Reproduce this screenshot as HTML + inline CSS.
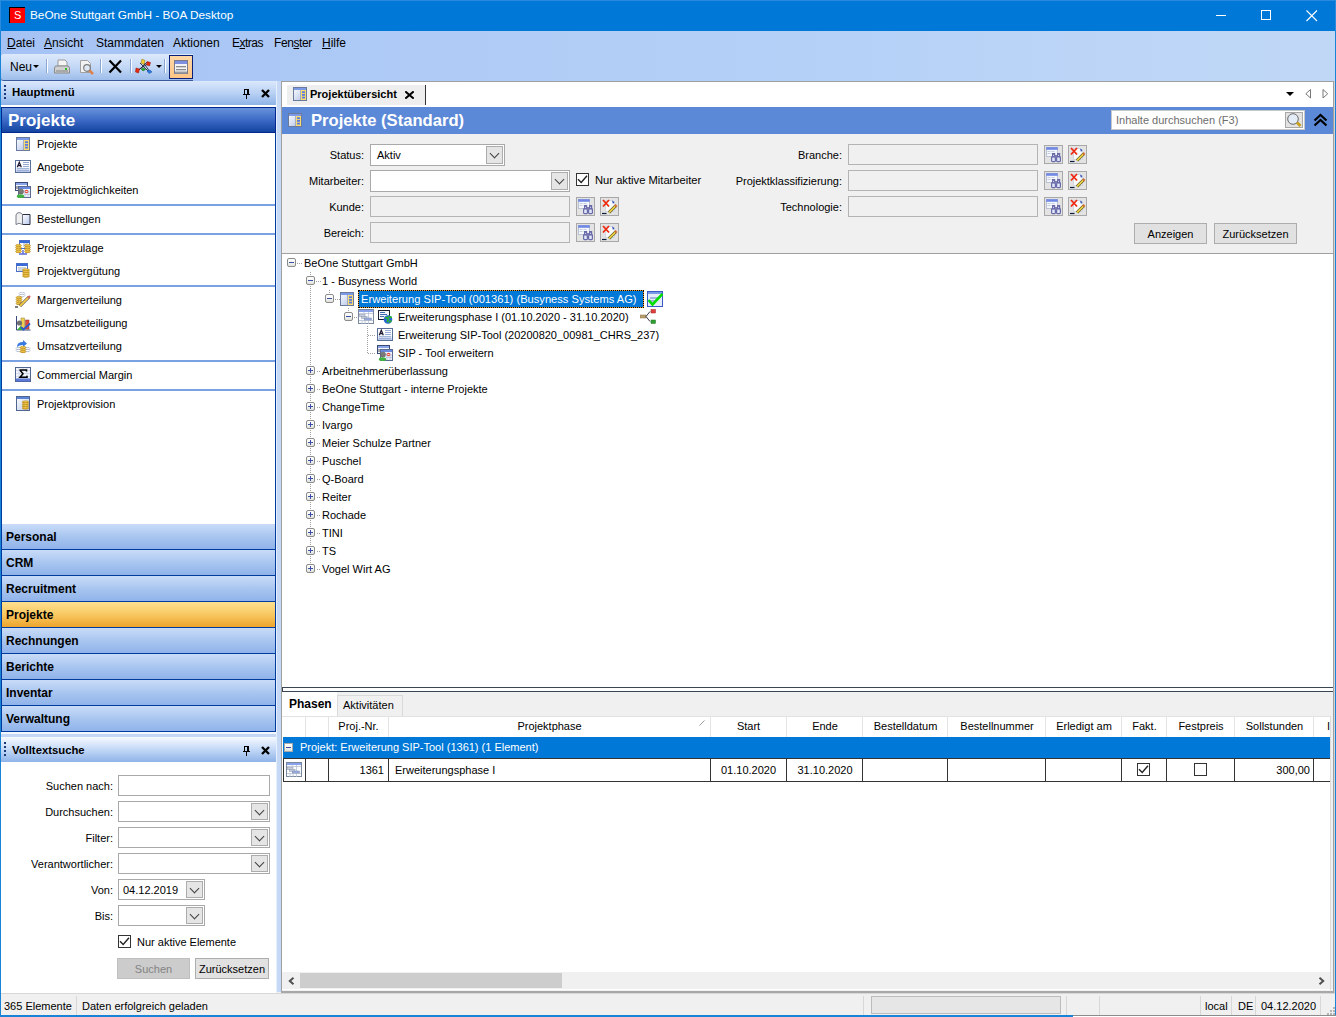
<!DOCTYPE html>
<html><head><meta charset="utf-8">
<style>
*{box-sizing:border-box;margin:0;padding:0}
html,body{width:1336px;height:1017px;overflow:hidden;background:#f0f0f0;font-family:"Liberation Sans",sans-serif;font-size:11px;color:#000}
.a{position:absolute}
.t{position:absolute;white-space:nowrap;line-height:1}
#title{left:0;top:0;width:1336px;height:31px;background:#0078d7;border-top:1px solid #2a8ade;border-left:1px solid #2a8ade;border-right:1px solid #2a8ade}
#menubar{left:1px;top:31px;width:1334px;height:50px;background:linear-gradient(90deg,#a4c2f4,#b0ccf6 35%,#b4d0f7 60%,#bdd6f7 85%,#c0d7f6)}
#toolbar{left:1px;top:54px;width:192px;height:27px;background:linear-gradient(#dde9fb,#c3d8f6 50%,#9ebdeb);border-bottom:1px solid #3b5c9a;border-radius:3px 0 0 3px}
.hdr{background:linear-gradient(#dbe8fc,#b9d1f4 50%,#8fb3e8)}
.navbtn{position:absolute;left:1px;width:275px;height:26px;background:linear-gradient(#c9dcf8,#a9c6f0 50%,#8fb3ea);border-bottom:1px solid #003c9d;font-weight:bold;font-size:12px}
.navbtn span{position:absolute;left:5px;top:7px;line-height:1}
.lbl{position:absolute;white-space:nowrap;line-height:1;text-align:right;font-size:12px}
.box{position:absolute;background:#fff;border:1px solid #a9a9a9}
.dis{position:absolute;background:#f0f0f0;border:1px solid #b4b4b4}
.cbtn{position:absolute;top:1px;right:1px;width:17px;bottom:1px;background:#e5e5e5;border:1px solid #acacac}
.cbtn::after{content:"";position:absolute;left:4px;top:3px;width:6px;height:6px;border-right:1px solid #404040;border-bottom:1px solid #404040;transform:rotate(45deg)}
.chk{position:absolute;width:13px;height:13px;border:1px solid #333;background:#fff}
.tb{position:absolute;width:9px;height:9px;border:1px solid #8c8c8c;border-radius:2px;background:linear-gradient(#fff,#f4f4f0 50%,#e2e2dc)}
.tb::after{content:"";position:absolute;left:1px;top:3px;width:5px;height:1px;background:#3b4fa8}
.tb.p::before{content:"";position:absolute;left:3px;top:1px;width:1px;height:5px;background:#3b4fa8}
.dv{position:absolute;width:1px;background:repeating-linear-gradient(#a0a0a0 0 1px,transparent 1px 2px)}
.dh{position:absolute;height:1px;background:repeating-linear-gradient(90deg,#a0a0a0 0 1px,transparent 1px 2px)}
.btn{position:absolute;background:#e1e1e1;border:1px solid #adadad;font-size:12px;text-align:center;line-height:20px}
</style></head><body>
<svg width="0" height="0" style="position:absolute"><defs>
<linearGradient id="gw" x1="0" y1="0" x2="1" y2="1"><stop offset="0" stop-color="#fff"/><stop offset="1" stop-color="#b8c8e8"/></linearGradient>
<linearGradient id="gc" x1="0" y1="0" x2="0" y2="1"><stop offset="0" stop-color="#ffe27a"/><stop offset="1" stop-color="#d49a10"/></linearGradient>
<symbol id="i-proj" viewBox="0 0 14 14"><linearGradient id="gp" x1="0" y1="0" x2="1" y2="1"><stop offset="0" stop-color="#fff"/><stop offset="1" stop-color="#aabce6"/></linearGradient><rect x=".5" y=".5" width="13" height="13" fill="url(#gp)" stroke="#6a7a9c"/><rect x="1" y="1" width="12" height="2" fill="#7c9ae6"/><rect x="8" y="3" width="5" height="10" fill="#f8dc70"/><path d="M7.5 3v10" stroke="#8a90a0" stroke-width=".6"/><rect x="9" y="4.3" width="3" height="1.8" fill="#5a7ae0"/><rect x="9" y="7" width="3" height="1.8" fill="#5a7ae0"/><rect x="9" y="9.7" width="3" height="1.8" fill="#5a7ae0"/></symbol>
<symbol id="i-doc" viewBox="0 0 16 13"><linearGradient id="gd" x1="0" y1="0" x2="0" y2="1"><stop offset="0" stop-color="#fff"/><stop offset=".6" stop-color="#f4f7fc"/><stop offset="1" stop-color="#b4c4e8"/></linearGradient><rect x=".5" y=".5" width="15" height="12" fill="url(#gd)" stroke="#5a6f9a"/><path d="M2.3 7.2L4.3 2.2l2 5M3 5.6h2.6" stroke="#201830" stroke-width="1.2" fill="none"/><path d="M8 2.5h6M8 4.5h6M8 6.5h6M2 8.7h12M2 10.7h12" stroke="#8aa0d0" stroke-width=".9"/></symbol>
<symbol id="i-opp" viewBox="0 0 16 16"><rect x=".5" y=".5" width="12" height="8" fill="#f4f6fb" stroke="#3a4a78"/><rect x="1" y="1" width="11" height="2" fill="#8aa4e8"/><path d="M2 4v3" stroke="#555" stroke-width="1"/><rect x="3.5" y="4.5" width="12" height="11" fill="#eef2fa" stroke="#5a6a90"/><rect x="4" y="5" width="11" height="2" fill="#6a8ae0"/><path d="M10 8v7M13 8v7M9 10h6M9 12.5h6" stroke="#b0bcd8" stroke-width=".7"/><circle cx="11.5" cy="9.5" r="1.8" fill="#e84a3a"/><rect x="10.5" y="9.2" width="2" height=".8" fill="#fff"/><circle cx="6" cy="9.5" r="2.6" fill="#7a7a7a" stroke="#555" stroke-width=".5"/><ellipse cx="5.5" cy="14.2" rx="3.6" ry="1.9" fill="#40b040"/></symbol>
<symbol id="i-book" viewBox="0 0 16 13"><linearGradient id="gb" x1="0" y1="0" x2="1" y2="1"><stop offset="0" stop-color="#fff"/><stop offset="1" stop-color="#b8c8ec"/></linearGradient><path d="M7.5 2.5h7.5v10H7.5z" fill="url(#gb)" stroke="#2a2f40"/><path d="M7.5 12.5Q4 10 1 12.5V3Q2 .5 4 .6 6 .6 7.5 2.5z" fill="#f0f0f0" stroke="#6a7080" stroke-width=".9"/></symbol>
<symbol id="i-coins" viewBox="0 0 16 16"><rect x="4.5" y=".5" width="10" height="8" fill="#fff" stroke="#4a6fc8"/><rect x="5" y="1" width="9" height="2" fill="#3a6ad8"/><path d="M8 4h5M8 6h5" stroke="#9ab"/><path d="M4 14h8M8 10v4" stroke="#5a6ad8" stroke-width="1.4"/><g fill="url(#gc)" stroke="#a87808" stroke-width=".5"><ellipse cx="3.5" cy="5.5" rx="3" ry="1.2"/><ellipse cx="3.5" cy="7.5" rx="3" ry="1.2"/><ellipse cx="3.5" cy="9.5" rx="3" ry="1.2"/><ellipse cx="3.5" cy="11.5" rx="3" ry="1.2"/><ellipse cx="12.5" cy="5.5" rx="3" ry="1.2"/><ellipse cx="12.5" cy="7.5" rx="3" ry="1.2"/><ellipse cx="12.5" cy="9.5" rx="3" ry="1.2"/><ellipse cx="12.5" cy="11.5" rx="3" ry="1.2"/></g></symbol>
<symbol id="i-verg" viewBox="0 0 14 15"><rect x=".5" y=".5" width="11" height="8" fill="#fff" stroke="#4a6fc8"/><rect x="1" y="1" width="10" height="2" fill="#3a6ad8"/><path d="M2 5h8M2 7h8" stroke="#9ab"/><g fill="url(#gc)" stroke="#a87808" stroke-width=".5"><ellipse cx="10" cy="7" rx="3.5" ry="1.3"/><ellipse cx="10" cy="9" rx="3.5" ry="1.3"/><ellipse cx="10" cy="11" rx="3.5" ry="1.3"/><ellipse cx="10" cy="13" rx="3.5" ry="1.3"/></g></symbol>
<symbol id="i-marg" viewBox="0 0 16 16"><g fill="#fff" stroke="#8899bb" stroke-width=".5"><ellipse cx="7" cy="1.5" rx="3" ry="1.2"/><ellipse cx="7" cy="3.5" rx="3" ry="1.2"/></g><g fill="url(#gc)" stroke="#a87808" stroke-width=".5"><ellipse cx="4" cy="5.5" rx="3" ry="1.2"/><ellipse cx="4" cy="7.5" rx="3" ry="1.2"/><ellipse cx="4" cy="9.5" rx="3" ry="1.2"/><ellipse cx="4" cy="11.5" rx="3" ry="1.2"/></g><path d="M5 14l9-9" stroke="#444" stroke-width="3"/><path d="M5 14l9-9" stroke="#f2c84a" stroke-width="2"/><path d="M13 6l2-2" stroke="#d06060" stroke-width="2.2"/><path d="M0 15h3" stroke="#000"/></symbol>
<symbol id="i-umsb" viewBox="0 0 16 16"><path d="M1.5 1v14h14" fill="none" stroke="#3a4a80" stroke-width="1"/><rect x="6" y="3" width="3.5" height="11" fill="#f0d050" stroke="#8a7a30" stroke-width=".5"/><rect x="10.5" y="5" width="3.5" height="9" fill="#e04a3a" stroke="#8a3a2a" stroke-width=".5"/><circle cx="4.5" cy="8" r="2.6" fill="#707070"/><path d="M2 15l3.5-4 3 3V15z" fill="#3ab03a"/><path d="M6 12l2.5 2.5 6.5-6" stroke="#2a5ad0" stroke-width="1.8" fill="none"/></symbol>
<symbol id="i-umsv" viewBox="0 0 16 16"><path d="M2 9q0-5 6-5V2l4 3.5L8 9V7q-4 0-6 2z" fill="#3a7ae0"/><g fill="#fff" stroke="#8899bb" stroke-width=".6"><ellipse cx="4" cy="10.5" rx="3" ry="1.2"/><ellipse cx="4" cy="12.5" rx="3" ry="1.2"/><ellipse cx="12" cy="10.5" rx="3" ry="1.2"/><ellipse cx="12" cy="12.5" rx="3" ry="1.2"/></g><g fill="url(#gc)" stroke="#a87808" stroke-width=".5"><ellipse cx="8" cy="9.5" rx="3" ry="1.2"/><ellipse cx="8" cy="11.5" rx="3" ry="1.2"/><ellipse cx="8" cy="13.5" rx="3" ry="1.2"/></g></symbol>
<symbol id="i-sum" viewBox="0 0 16 15"><rect x=".5" y=".5" width="15" height="14" fill="#f4f6fb" stroke="#50658f"/><path d="M1 3.5h14M1 6.5h14M1 9.5h14M4 1v13M8 1v13M12 1v13" stroke="#c4d0e8" stroke-width=".7"/><rect x="1" y="11.5" width="14" height="3" fill="#4a6ad0"/><path d="M1 13h14" stroke="#8aa0e0" stroke-width=".6"/><path d="M4.5 3h7v1.4M5 3.3l3 3.5-3 3.5h7V8.8" stroke="#000" stroke-width="1.5" fill="none"/></symbol>
<symbol id="i-prov" viewBox="0 0 14 15"><rect x=".5" y=".5" width="13" height="14" fill="url(#gw)" stroke="#50658f"/><rect x="1" y="1" width="12" height="2" fill="#5a84d8"/><g fill="url(#gc)" stroke="#a87808" stroke-width=".5"><ellipse cx="9.5" cy="6" rx="3.3" ry="1.2"/><ellipse cx="9.5" cy="8" rx="3.3" ry="1.2"/><ellipse cx="9.5" cy="10" rx="3.3" ry="1.2"/><ellipse cx="9.5" cy="12" rx="3.3" ry="1.2"/></g></symbol>
<symbol id="i-lookup" viewBox="0 0 19 19"><rect x=".5" y=".5" width="18" height="18" fill="#e3e3e3" stroke="#a8a8a8"/><rect x="2.5" y="2.5" width="11" height="9" fill="#f4f7fc" stroke="#9aa6c0" stroke-width=".6"/><rect x="2.2" y="2.2" width="11.6" height="2.6" fill="#7088e4"/><path d="M3.5 6.5h3M7.5 6.5h3M3.5 8.5h3M7.5 8.5h3" stroke="#b8c0d8" stroke-width=".8"/><g fill="#dfe8fa" stroke="#6a6aa8" stroke-width="1.2"><rect x="7.6" y="11.6" width="3.8" height="5" rx=".8"/><rect x="12.6" y="11.6" width="3.8" height="5" rx=".8"/><rect x="8.6" y="8.6" width="2" height="3.2"/><rect x="13.6" y="8.6" width="2" height="3.2"/></g><rect x="10.5" y="10" width="2.5" height="3" fill="#7a7ab0"/></symbol>
<symbol id="i-clear" viewBox="0 0 19 19"><rect x=".5" y=".5" width="18" height="18" fill="#e3e3e3" stroke="#a8a8a8"/><path d="M5.5 3.5h7l2 2v9h-9z" fill="#fafafa" stroke="#c0c8d8" stroke-width=".6"/><path d="M3 3l6 6.5M9 3L3 9.5" stroke="#ee2a10" stroke-width="1.8"/><path d="M12 3.5l2.5 1.5-1.5 2z" fill="#2a4ab8"/><path d="M9 15.5l6.5-6.5" stroke="#3a3a20" stroke-width="3"/><path d="M9 15.5l6.5-6.5" stroke="#e8d040" stroke-width="1.8"/><path d="M15 9.5l1.5-1.5" stroke="#d07030" stroke-width="2.6"/><path d="M2 16.5h4.5" stroke="#0a1a3a" stroke-width="1.2"/></symbol>
<symbol id="i-phase" viewBox="0 0 16 15"><rect x=".5" y=".5" width="15" height="14" fill="#fafbfe" stroke="#7a889e"/><rect x="1" y="1" width="14" height="2" fill="#8aa2ec"/><path d="M1 4.5h14M1 11.5h14M6 3v2M10.5 3v12M4 11v4M7 11v4" stroke="#b8c2d4" stroke-width=".8"/><rect x="1.5" y="5.5" width="5.5" height="2" fill="#c8d0e0" stroke="#8a94a8" stroke-width=".5"/><rect x="3.5" y="7.5" width="5.5" height="2" fill="#c8d0e0" stroke="#8a94a8" stroke-width=".5"/><rect x="6.5" y="9" width="7" height="2" fill="#9ab0ec" stroke="#7a84a0" stroke-width=".5"/></symbol>
<symbol id="i-globe" viewBox="0 0 15 14"><rect x=".5" y=".5" width="11" height="9" fill="#f4f6fa" stroke="#1a2030"/><path d="M2 2.5h5M2 4.5h7M2 6.5h4" stroke="#2a5aa8" stroke-width=".9"/><circle cx="10" cy="9.5" r="4.3" fill="#2a68d0"/><path d="M7.2 8q1.8-1 2.8.5t-1 3.5M10.5 6q1 1.5 3.5 1.2M11 12.5q1.5-1 2.5-2" stroke="#28b828" stroke-width="1.6" fill="none"/></symbol>
</defs></svg>
<!-- window frame -->
<div class="a" style="left:0;top:0;width:1336px;height:1017px;border:1px solid #1883d7;border-top:none"></div>
<div class="a" id="title"></div>
<div class="a" style="left:9px;top:7px;width:16px;height:16px;background:#ff0000;border-left:1px solid #000;border-top:1px solid #000"></div>
<div class="t" style="left:14px;top:10px;color:#fff;font-size:11px">S</div>
<div class="t" style="left:30px;top:10px;color:#fff;font-size:11.8px">BeOne Stuttgart GmbH - BOA Desktop</div>

<div class="a" id="menubar"></div>
<div class="a" id="toolbar"></div>
<!-- menu -->
<div class="t" style="left:7px;top:37px;font-size:12px"><u>D</u>atei</div>
<div class="t" style="left:44px;top:37px;font-size:12px"><u>A</u>nsicht</div>
<div class="t" style="left:96px;top:37px;font-size:12px">Stammdaten</div>
<div class="t" style="left:173px;top:37px;font-size:12px">Aktionen</div>
<div class="t" style="left:232px;top:37px;font-size:12px;letter-spacing:-0.5px">E<u>x</u>tras</div>
<div class="t" style="left:274px;top:37px;font-size:12px;letter-spacing:-0.4px">Fen<u>s</u>ter</div>
<div class="t" style="left:322px;top:37px;font-size:12px"><u>H</u>ilfe</div>
<!-- window controls -->
<div class="a" style="left:1216px;top:15px;width:10px;height:1px;background:#fff"></div>
<div class="a" style="left:1261px;top:10px;width:10px;height:10px;border:1px solid #fff"></div>
<svg class="a" style="left:1306px;top:10px" width="12" height="12" viewBox="0 0 12 12"><path d="M0.5 0.5L11 11M11 0.5L0.5 11" stroke="#fff" stroke-width="1.1"/></svg>
<!-- toolbar items -->
<div class="t" style="left:10px;top:61px;font-size:12px">Neu</div>
<svg class="a" style="left:33px;top:65px" width="6" height="3"><path d="M0 0h6L3 3z" fill="#000"/></svg>
<div class="a" style="left:46px;top:59px;width:2px;height:14px;border-left:1px solid #8aa6d2;border-right:1px solid #fff"></div>
<div class="a" style="left:100px;top:59px;width:2px;height:14px;border-left:1px solid #8aa6d2;border-right:1px solid #fff"></div>
<div class="a" style="left:130px;top:59px;width:2px;height:14px;border-left:1px solid #8aa6d2;border-right:1px solid #fff"></div>
<div class="a" style="left:164px;top:59px;width:2px;height:14px;border-left:1px solid #8aa6d2;border-right:1px solid #fff"></div>
<svg class="a" style="left:54px;top:59px" width="16" height="16" viewBox="0 0 16 16">
 <path d="M4 1h7l2 2v4H4z" fill="#f4f4f4" stroke="#9a9a9a"/>
 <path d="M1.5 7h13l1 2v5h-15V9z" fill="#d0d0d0" stroke="#8a8a8a"/>
 <rect x="2" y="11" width="12" height="2" fill="#a8a8a8"/><rect x="11" y="9" width="2" height="2" fill="#2fc12f"/></svg>
<svg class="a" style="left:79px;top:59px" width="16" height="16" viewBox="0 0 16 16">
 <path d="M1.5 1.5h7l3 3v9h-10z" fill="#f2f2f2" stroke="#a0a0a0"/>
 <circle cx="8" cy="9" r="3.3" fill="#dfe9f5" stroke="#7c7c7c" stroke-width="1.2"/>
 <path d="M10.5 11.5l3.5 3.5" stroke="#e0804a" stroke-width="2.5"/></svg>
<svg class="a" style="left:108px;top:59px" width="15" height="15" viewBox="0 0 15 15"><path d="M1.5 1.5L13 13.5M13 1.5L1.5 13.5" stroke="#000" stroke-width="2.2"/></svg>
<svg class="a" style="left:135px;top:58px" width="18" height="17" viewBox="0 0 18 17">
 <path d="M3 12L14 5M8 4l7 10M5 5l8 8M4 12l8-8" stroke="#1a1a2a" stroke-width=".8"/>
 <path d="M7 1l3 1.5-1 4-3-1.5z" fill="#f2d030" stroke="#8a7010" stroke-width=".5"/>
 <path d="M12 3.5l3.5 1-1 3.5-3-1z" fill="#e82a10" stroke="#901a08" stroke-width=".5"/>
 <path d="M1 10l3.5 1-1 4-3-1z" fill="#e82a10" stroke="#901a08" stroke-width=".5"/>
 <path d="M6 11l2.5-1 2 1.5-2.5 1.5z" fill="#28a828" stroke="#186818" stroke-width=".5"/>
 <path d="M12 13l3-1 2 2-3 1.5z" fill="#2a7ae8" stroke="#1a4a98" stroke-width=".5"/></svg>
<svg class="a" style="left:156px;top:65px" width="6" height="3"><path d="M0 0h6L3 3z" fill="#000"/></svg>
<div class="a" style="left:169px;top:55px;width:24px;height:24px;background:linear-gradient(#ffd8a6,#ffc585);border:1px solid #0a1f7a"></div>
<svg class="a" style="left:174px;top:60px" width="14" height="14" viewBox="0 0 14 14">
 <rect x=".5" y=".5" width="13" height="13" fill="#f4f4f4" stroke="#7a7a8a"/>
 <rect x="1" y="1" width="12" height="3" fill="#7e8fe0"/>
 <rect x="2" y="6" width="10" height="1.3" fill="#8a8a8a"/><rect x="2" y="9" width="10" height="1.3" fill="#8a8a8a"/><rect x="1" y="11.5" width="12" height="2" fill="#9a9aa4"/></svg>

<!-- left panel -->
<div class="a hdr" style="left:1px;top:81px;width:275px;height:24px"></div>
<div class="t" style="left:12px;top:87px;font-weight:bold;font-size:11.4px">Hauptmenü</div>
<div class="a" style="left:4px;top:85px;width:2px;height:15px;background:repeating-linear-gradient(#1a3a7a 0 2px,transparent 2px 4px)"></div>
<svg class="a" style="left:243px;top:89px" width="8" height="10" shape-rendering="crispEdges"><rect x="1" y="0" width="5" height="1"/><rect x="1" y="0" width="1" height="5"/><rect x="4" y="0" width="2" height="5"/><rect x="0" y="5" width="7" height="1"/><rect x="3" y="6" width="1" height="4"/></svg>
<svg class="a" style="left:261px;top:89px" width="9" height="9" viewBox="0 0 9 9"><path d="M1 1L8 8M8 1L1 8" stroke="#000" stroke-width="2.3"/></svg>
<div class="a" style="left:1px;top:105px;width:275px;height:2px;background:#fff"></div>
<div class="a" style="left:1px;top:107px;width:275px;height:417px;background:#fff;border:1px solid #003c9d;border-bottom:none"></div>
<div class="a" style="left:1px;top:107px;width:275px;height:26px;background:linear-gradient(#6893da,#3c6ac6 50%,#1244a0);border:1px solid #00288e"></div>
<div class="t" style="left:8px;top:112px;color:#fff;font-weight:bold;font-size:17px">Projekte</div>

<!-- left items -->
<svg class="a" style="left:16px;top:137px" width="14" height="14"><use href="#i-proj"/></svg>
<div class="t" style="left:37px;top:139px">Projekte</div>
<svg class="a" style="left:15px;top:160px" width="16" height="13"><use href="#i-doc"/></svg>
<div class="t" style="left:37px;top:162px">Angebote</div>
<svg class="a" style="left:15px;top:182px" width="16" height="16"><use href="#i-opp"/></svg>
<div class="t" style="left:37px;top:185px">Projektmöglichkeiten</div>
<div class="a" style="left:2px;top:204px;width:273px;height:2px;background:#7aa2e2"></div>
<svg class="a" style="left:15px;top:212px" width="16" height="13"><use href="#i-book"/></svg>
<div class="t" style="left:37px;top:214px">Bestellungen</div>
<div class="a" style="left:2px;top:233px;width:273px;height:2px;background:#7aa2e2"></div>
<svg class="a" style="left:15px;top:240px" width="16" height="16"><use href="#i-coins"/></svg>
<div class="t" style="left:37px;top:243px">Projektzulage</div>
<svg class="a" style="left:16px;top:263px" width="14" height="15"><use href="#i-verg"/></svg>
<div class="t" style="left:37px;top:266px">Projektvergütung</div>
<div class="a" style="left:2px;top:285px;width:273px;height:2px;background:#7aa2e2"></div>
<svg class="a" style="left:15px;top:292px" width="16" height="16"><use href="#i-marg"/></svg>
<div class="t" style="left:37px;top:295px">Margenverteilung</div>
<svg class="a" style="left:15px;top:315px" width="16" height="16"><use href="#i-umsb"/></svg>
<div class="t" style="left:37px;top:318px">Umsatzbeteiligung</div>
<svg class="a" style="left:15px;top:338px" width="16" height="16"><use href="#i-umsv"/></svg>
<div class="t" style="left:37px;top:341px">Umsatzverteilung</div>
<div class="a" style="left:2px;top:360px;width:273px;height:2px;background:#7aa2e2"></div>
<svg class="a" style="left:15px;top:367px" width="16" height="15"><use href="#i-sum"/></svg>
<div class="t" style="left:37px;top:370px">Commercial Margin</div>
<div class="a" style="left:2px;top:389px;width:273px;height:2px;background:#7aa2e2"></div>
<svg class="a" style="left:16px;top:396px" width="14" height="15"><use href="#i-prov"/></svg>
<div class="t" style="left:37px;top:399px">Projektprovision</div>
<!-- nav buttons -->
<div class="navbtn" style="top:524px"><span>Personal</span></div>
<div class="navbtn" style="top:550px"><span>CRM</span></div>
<div class="navbtn" style="top:576px"><span>Recruitment</span></div>
<div class="navbtn" style="top:602px;background:linear-gradient(#fde08e,#f8c862 50%,#efa42c)"><span>Projekte</span></div>
<div class="navbtn" style="top:628px"><span>Rechnungen</span></div>
<div class="navbtn" style="top:654px"><span>Berichte</span></div>
<div class="navbtn" style="top:680px"><span>Inventar</span></div>
<div class="navbtn" style="top:706px"><span>Verwaltung</span></div>
<div class="a" style="left:1px;top:524px;width:1px;height:208px;background:#003c9d"></div>
<div class="a" style="left:275px;top:524px;width:1px;height:208px;background:#003c9d"></div>
<!-- Volltextsuche -->
<div class="a" style="left:1px;top:732px;width:275px;height:2px;background:#f4f8fe"></div>
<div class="a" style="left:1px;top:734px;width:275px;height:3px;background:#c4d8f6"></div>
<div class="a" style="left:1px;top:737px;width:275px;height:25px;background:linear-gradient(#f6faff,#c8dcf8 45%,#8fb3e8)"></div>
<div class="t" style="left:12px;top:745px;font-weight:bold;font-size:11.3px">Volltextsuche</div>
<div class="a" style="left:4px;top:742px;width:2px;height:15px;background:repeating-linear-gradient(#1a3a7a 0 2px,transparent 2px 4px)"></div>
<svg class="a" style="left:243px;top:746px" width="8" height="10" shape-rendering="crispEdges"><rect x="1" y="0" width="5" height="1"/><rect x="1" y="0" width="1" height="5"/><rect x="4" y="0" width="2" height="5"/><rect x="0" y="5" width="7" height="1"/><rect x="3" y="6" width="1" height="4"/></svg>
<svg class="a" style="left:261px;top:746px" width="9" height="9" viewBox="0 0 9 9"><path d="M1 1L8 8M8 1L1 8" stroke="#000" stroke-width="2.3"/></svg>
<div class="a" style="left:1px;top:762px;width:275px;height:231px;background:#fff"></div>
<div class="lbl" style="right:1223px;top:781px;font-size:11px">Suchen nach:</div>
<div class="box" style="left:118px;top:775px;width:152px;height:21px"></div>
<div class="lbl" style="right:1223px;top:807px;font-size:11px">Durchsuchen:</div>
<div class="box" style="left:118px;top:801px;width:152px;height:21px"><div class="cbtn"></div></div>
<div class="lbl" style="right:1223px;top:833px;font-size:11px">Filter:</div>
<div class="box" style="left:118px;top:827px;width:152px;height:21px"><div class="cbtn"></div></div>
<div class="lbl" style="right:1223px;top:859px;font-size:11px">Verantwortlicher:</div>
<div class="box" style="left:118px;top:853px;width:152px;height:21px"><div class="cbtn"></div></div>
<div class="lbl" style="right:1223px;top:885px;font-size:11px">Von:</div>
<div class="box" style="left:118px;top:879px;width:87px;height:21px"><div class="cbtn"></div></div>
<div class="t" style="left:123px;top:885px">04.12.2019</div>
<div class="lbl" style="right:1223px;top:911px;font-size:11px">Bis:</div>
<div class="box" style="left:118px;top:905px;width:87px;height:21px"><div class="cbtn"></div></div>
<div class="chk" style="left:118px;top:935px"><svg width="11" height="11" style="position:absolute;left:0;top:0" viewBox="0 0 11 11"><path d="M1 5.2l3.2 3.3L10 1.8" fill="none" stroke="#222" stroke-width="1.4"/></svg></div>
<div class="t" style="left:137px;top:937px">Nur aktive Elemente</div>
<div class="btn" style="left:117px;top:958px;width:73px;height:21px;background:#cccccc;border-color:#bfbfbf;color:#838383;font-size:11px">Suchen</div>
<div class="btn" style="left:195px;top:958px;width:74px;height:21px;font-size:11px">Zurücksetzen</div>
<!-- main panel -->
<div class="a" style="left:276px;top:81px;width:5px;height:911px;background:#c5d9f7;border-left:1px solid #e6effc"></div>
<div class="a" style="left:281px;top:81px;width:1053px;height:911px;background:#f0f0f0;border-left:1px solid #a0a0a0;border-top:1px solid #a0a0a0"></div>
<div class="a" style="left:282px;top:82px;width:1052px;height:25px;background:#fff"></div>
<div class="a" style="left:282px;top:107px;width:1052px;height:27px;background:#5b88d7"></div>
<!-- tab strip -->
<div class="a" style="left:287px;top:85px;width:139px;height:20px;background:#eeeeee;border-right:1px solid #333"></div>
<svg class="a" style="left:293px;top:87px" width="14" height="14"><use href="#i-proj"/></svg>
<div class="t" style="left:310px;top:89px;font-weight:bold">Projektübersicht</div>
<svg class="a" style="left:405px;top:91px" width="9" height="8"><path d="M1 1L8 7M8 1L1 7" stroke="#000" stroke-width="2" stroke-linecap="square"/></svg>
<svg class="a" style="left:1286px;top:92px" width="8" height="4"><path d="M0 0h8L4 4z" fill="#000"/></svg>
<svg class="a" style="left:1305px;top:89px" width="7" height="10"><path d="M5.5 .5v8.5L.8 4.8z" fill="none" stroke="#777"/></svg>
<svg class="a" style="left:1322px;top:89px" width="7" height="10"><path d="M1 .5v8.5l4.7-4.2z" fill="none" stroke="#777"/></svg>
<!-- header -->
<svg class="a" style="left:288px;top:113px" width="14" height="14"><use href="#i-proj"/></svg>
<div class="box" style="left:1111px;top:110px;width:194px;height:20px;border-color:#c8c8c8"></div>
<div class="t" style="left:1116px;top:115px;color:#6d6d6d">Inhalte durchsuchen (F3)</div>
<svg class="a" style="left:1285px;top:112px" width="18" height="16" viewBox="0 0 18 16"><rect x=".5" y=".5" width="17" height="15" fill="#e3e3e3" stroke="#a8a8a8"/><circle cx="8" cy="7" r="5.3" fill="#e4ecf8" stroke="#6a6a6a" stroke-width="1"/><path d="M12 10.5l3.5 3.5" stroke="#c8a020" stroke-width="3"/></svg>
<svg class="a" style="left:1313px;top:113px" width="15" height="14"><path d="M1.5 7.5l6-5.5 6 5.5M1.5 12.5l6-5.5 6 5.5" fill="none" stroke="#000" stroke-width="2.2"/></svg>
<div class="t" style="left:311px;top:113px;color:#fff;font-weight:bold;font-size:16.6px">Projekte (Standard)</div>
<!-- form -->
<div class="lbl" style="right:972px;top:150px;font-size:11px">Status:</div>
<div class="box" style="left:370px;top:144px;width:135px;height:22px"><div class="cbtn"></div></div>
<div class="t" style="left:377px;top:150px">Aktiv</div>
<div class="lbl" style="right:972px;top:176px;font-size:11px">Mitarbeiter:</div>
<div class="box" style="left:370px;top:170px;width:200px;height:22px"><div class="cbtn"></div></div>
<div class="chk" style="left:576px;top:173px"><svg width="11" height="11" style="position:absolute;left:0;top:0" viewBox="0 0 11 11"><path d="M1 5.2l3.2 3.3L10 1.8" fill="none" stroke="#222" stroke-width="1.4"/></svg></div>
<div class="t" style="left:595px;top:175px;font-size:11.2px">Nur aktive Mitarbeiter</div>
<div class="lbl" style="right:972px;top:202px;font-size:11px">Kunde:</div>
<div class="dis" style="left:370px;top:196px;width:200px;height:21px"></div>
<svg class="a" style="left:576px;top:197px" width="19" height="19"><use href="#i-lookup"/></svg>
<svg class="a" style="left:600px;top:197px" width="19" height="19"><use href="#i-clear"/></svg>
<div class="lbl" style="right:972px;top:228px;font-size:11px">Bereich:</div>
<div class="dis" style="left:370px;top:222px;width:200px;height:21px"></div>
<svg class="a" style="left:576px;top:223px" width="19" height="19"><use href="#i-lookup"/></svg>
<svg class="a" style="left:600px;top:223px" width="19" height="19"><use href="#i-clear"/></svg>
<div class="lbl" style="right:494px;top:150px;font-size:11px">Branche:</div>
<div class="dis" style="left:848px;top:144px;width:190px;height:21px"></div>
<svg class="a" style="left:1044px;top:145px" width="19" height="19"><use href="#i-lookup"/></svg>
<svg class="a" style="left:1068px;top:145px" width="19" height="19"><use href="#i-clear"/></svg>
<div class="lbl" style="right:494px;top:176px;font-size:11px">Projektklassifizierung:</div>
<div class="dis" style="left:848px;top:170px;width:190px;height:21px"></div>
<svg class="a" style="left:1044px;top:171px" width="19" height="19"><use href="#i-lookup"/></svg>
<svg class="a" style="left:1068px;top:171px" width="19" height="19"><use href="#i-clear"/></svg>
<div class="lbl" style="right:494px;top:202px;font-size:11px">Technologie:</div>
<div class="dis" style="left:848px;top:196px;width:190px;height:21px"></div>
<svg class="a" style="left:1044px;top:197px" width="19" height="19"><use href="#i-lookup"/></svg>
<svg class="a" style="left:1068px;top:197px" width="19" height="19"><use href="#i-clear"/></svg>
<div class="btn" style="left:1134px;top:223px;width:73px;height:21px;font-size:11px">Anzeigen</div>
<div class="btn" style="left:1214px;top:223px;width:83px;height:21px;font-size:11px">Zurücksetzen</div>
<div class="a" style="left:282px;top:253px;width:1052px;height:434px;background:#fff;border-top:1px solid #a0a0a0"></div>

<!-- tree -->
<div class="dv" style="left:310px;top:272px;height:298px"></div>
<div class="dv" style="left:329px;top:290px;height:4px"></div>
<div class="dv" style="left:348px;top:308px;height:4px"></div>
<div class="dv" style="left:367px;top:326px;height:28px"></div>
<div class="tb" style="left:287px;top:258px"></div><div class="dh" style="left:297px;top:263px;width:6px"></div><div class="t" style="left:304px;top:258px">BeOne Stuttgart GmbH</div>
<div class="tb" style="left:306px;top:276px"></div><div class="dh" style="left:316px;top:281px;width:6px"></div><div class="t" style="left:322px;top:276px">1 - Busyness World</div>
<div class="tb" style="left:325px;top:294px"></div><div class="dh" style="left:335px;top:299px;width:5px"></div>
<svg class="a" style="left:340px;top:292px" width="14" height="14"><use href="#i-proj"/></svg>
<div class="a" style="left:358px;top:290px;width:286px;height:18px;background:#0078d7;border:1px solid #f49a2a;outline:1px dotted #000;outline-offset:-1px"></div>
<div class="t" style="left:361px;top:294px;color:#fff;font-size:11.15px">Erweiterung SIP-Tool (001361) (Busyness Systems AG)</div>
<svg class="a" style="left:647px;top:291px" width="16" height="16" viewBox="0 0 16 16"><rect x=".5" y=".5" width="15" height="15" fill="#e6ecf8" stroke="#3a5ac8"/><rect x="1" y="1" width="14" height="2" fill="#7a9ae8"/><path d="M3 7h8M3 10h5" stroke="#8fa2d8" stroke-width="1.5"/><path d="M1.5 9l4 4.5L15.5 3" fill="none" stroke="#00e000" stroke-width="2.6"/></svg>
<div class="tb" style="left:344px;top:312px"></div><div class="dh" style="left:354px;top:317px;width:4px"></div>
<svg class="a" style="left:358px;top:309px" width="16" height="15"><use href="#i-phase"/></svg>
<svg class="a" style="left:378px;top:310px" width="15" height="14"><use href="#i-globe"/></svg>
<div class="t" style="left:398px;top:312px">Erweiterungsphase I (01.10.2020 - 31.10.2020)</div>
<svg class="a" style="left:640px;top:309px" width="16" height="15" viewBox="0 0 16 15"><rect x="0" y="6" width="6" height="3" fill="#b8a070" stroke="#8a7040" stroke-width=".5"/><path d="M6 7.5l4-5M6 7.5l4 5" stroke="#223" stroke-width=".9"/><rect x="11" y="0.5" width="4.5" height="3.5" fill="#e04040" stroke="#a02020" stroke-width=".5"/><rect x="11" y="11" width="4.5" height="3.5" fill="#30a030" stroke="#207020" stroke-width=".5"/></svg>
<div class="dh" style="left:368px;top:335px;width:8px"></div><svg class="a" style="left:377px;top:328px" width="16" height="13"><use href="#i-doc"/></svg>
<div class="t" style="left:398px;top:330px">Erweiterung SIP-Tool (20200820_00981_CHRS_237)</div>
<div class="dh" style="left:368px;top:353px;width:8px"></div><svg class="a" style="left:377px;top:345px" width="16" height="16"><use href="#i-opp"/></svg>
<div class="t" style="left:398px;top:348px">SIP - Tool erweitern</div>
<div class="tb p" style="left:306px;top:366px"></div><div class="dh" style="left:317px;top:371px;width:4px"></div><div class="t" style="left:322px;top:366px">Arbeitnehmerüberlassung</div>
<div class="tb p" style="left:306px;top:384px"></div><div class="dh" style="left:317px;top:389px;width:4px"></div><div class="t" style="left:322px;top:384px">BeOne Stuttgart - interne Projekte</div>
<div class="tb p" style="left:306px;top:402px"></div><div class="dh" style="left:317px;top:407px;width:4px"></div><div class="t" style="left:322px;top:402px">ChangeTime</div>
<div class="tb p" style="left:306px;top:420px"></div><div class="dh" style="left:317px;top:425px;width:4px"></div><div class="t" style="left:322px;top:420px">Ivargo</div>
<div class="tb p" style="left:306px;top:438px"></div><div class="dh" style="left:317px;top:443px;width:4px"></div><div class="t" style="left:322px;top:438px">Meier Schulze Partner</div>
<div class="tb p" style="left:306px;top:456px"></div><div class="dh" style="left:317px;top:461px;width:4px"></div><div class="t" style="left:322px;top:456px">Puschel</div>
<div class="tb p" style="left:306px;top:474px"></div><div class="dh" style="left:317px;top:479px;width:4px"></div><div class="t" style="left:322px;top:474px">Q-Board</div>
<div class="tb p" style="left:306px;top:492px"></div><div class="dh" style="left:317px;top:497px;width:4px"></div><div class="t" style="left:322px;top:492px">Reiter</div>
<div class="tb p" style="left:306px;top:510px"></div><div class="dh" style="left:317px;top:515px;width:4px"></div><div class="t" style="left:322px;top:510px">Rochade</div>
<div class="tb p" style="left:306px;top:528px"></div><div class="dh" style="left:317px;top:533px;width:4px"></div><div class="t" style="left:322px;top:528px">TINI</div>
<div class="tb p" style="left:306px;top:546px"></div><div class="dh" style="left:317px;top:551px;width:4px"></div><div class="t" style="left:322px;top:546px">TS</div>
<div class="tb p" style="left:306px;top:564px"></div><div class="dh" style="left:317px;top:569px;width:4px"></div><div class="t" style="left:322px;top:564px">Vogel Wirt AG</div>
<!-- splitter -->
<div class="a" style="left:282px;top:687px;width:1052px;height:5px;border:1px solid #3a4656;background:#fff"></div>
<!-- grid tabs -->
<div class="a" style="left:282px;top:692px;width:1052px;height:24px;background:#f0f0f0"></div>
<div class="a" style="left:282px;top:692px;width:55px;height:24px;background:#fff"></div>
<div class="t" style="left:289px;top:698px;font-weight:bold;font-size:12px">Phasen</div>
<div class="a" style="left:337px;top:695px;width:66px;height:21px;background:#f0f0f0;border:1px solid #dadada;border-bottom:none"></div>
<div class="t" style="left:343px;top:700px">Aktivitäten</div>
<!-- grid -->
<div class="a" style="left:282px;top:716px;width:1048px;height:256px;background:#fff;border-top:1px solid #e2e2e2"></div>
<div class="a" style="left:1330px;top:716px;width:4px;height:256px;background:#f0f0f0"></div>
<div class="a" style="left:305px;top:716px;width:1px;height:21px;background:#e4e4e4"></div>
<div class="a" style="left:328px;top:716px;width:1px;height:21px;background:#e4e4e4"></div>
<div class="a" style="left:388px;top:716px;width:1px;height:21px;background:#e4e4e4"></div>
<div class="a" style="left:710px;top:716px;width:1px;height:21px;background:#e4e4e4"></div>
<div class="a" style="left:786px;top:716px;width:1px;height:21px;background:#e4e4e4"></div>
<div class="a" style="left:862px;top:716px;width:1px;height:21px;background:#e4e4e4"></div>
<div class="a" style="left:947px;top:716px;width:1px;height:21px;background:#e4e4e4"></div>
<div class="a" style="left:1045px;top:716px;width:1px;height:21px;background:#e4e4e4"></div>
<div class="a" style="left:1121px;top:716px;width:1px;height:21px;background:#e4e4e4"></div>
<div class="a" style="left:1166px;top:716px;width:1px;height:21px;background:#e4e4e4"></div>
<div class="a" style="left:1234px;top:716px;width:1px;height:21px;background:#e4e4e4"></div>
<div class="a" style="left:1313px;top:716px;width:1px;height:21px;background:#e4e4e4"></div>
<div class="t" style="left:328px;width:61px;top:721px;text-align:center">Proj.-Nr.</div>
<div class="t" style="left:389px;width:321px;top:721px;text-align:center">Projektphase</div>
<div class="t" style="left:710px;width:77px;top:721px;text-align:center">Start</div>
<div class="t" style="left:787px;width:76px;top:721px;text-align:center">Ende</div>
<div class="t" style="left:863px;width:85px;top:721px;text-align:center">Bestelldatum</div>
<div class="t" style="left:948px;width:98px;top:721px;text-align:center">Bestellnummer</div>
<div class="t" style="left:1046px;width:76px;top:721px;text-align:center">Erledigt am</div>
<div class="t" style="left:1122px;width:45px;top:721px;text-align:center">Fakt.</div>
<div class="t" style="left:1167px;width:68px;top:721px;text-align:center">Festpreis</div>
<div class="t" style="left:1235px;width:79px;top:721px;text-align:center">Sollstunden</div>
<div class="t" style="left:1327px;top:721px">I</div>
<svg class="a" style="left:699px;top:720px" width="6" height="6"><path d="M.5 5.5l5-5" stroke="#999"/></svg>
<div class="a" style="left:283px;top:737px;width:1047px;height:21px;background:#0078d7"></div>
<div class="tb" style="left:284px;top:743px;border-radius:0;border-color:#aaa"></div>
<div class="t" style="left:300px;top:742px;color:#fff">Projekt: Erweiterung SIP-Tool (1361) (1 Element)</div>
<div class="a" style="left:283px;top:758px;width:1047px;height:24px;border-top:1px solid #333;border-bottom:1px solid #333;border-left:1px solid #333"></div>
<div class="a" style="left:305px;top:758px;width:1px;height:24px;background:#333"></div>
<div class="a" style="left:328px;top:758px;width:1px;height:24px;background:#333"></div>
<div class="a" style="left:388px;top:758px;width:1px;height:24px;background:#333"></div>
<div class="a" style="left:710px;top:758px;width:1px;height:24px;background:#333"></div>
<div class="a" style="left:786px;top:758px;width:1px;height:24px;background:#333"></div>
<div class="a" style="left:862px;top:758px;width:1px;height:24px;background:#333"></div>
<div class="a" style="left:947px;top:758px;width:1px;height:24px;background:#333"></div>
<div class="a" style="left:1045px;top:758px;width:1px;height:24px;background:#333"></div>
<div class="a" style="left:1121px;top:758px;width:1px;height:24px;background:#333"></div>
<div class="a" style="left:1166px;top:758px;width:1px;height:24px;background:#333"></div>
<div class="a" style="left:1234px;top:758px;width:1px;height:24px;background:#333"></div>
<div class="a" style="left:1313px;top:758px;width:1px;height:24px;background:#333"></div>
<svg class="a" style="left:286px;top:762px" width="16" height="15"><use href="#i-phase"/></svg>
<div class="t" style="left:328px;width:56px;top:765px;text-align:right">1361</div>
<div class="t" style="left:395px;top:765px">Erweiterungsphase I</div>
<div class="t" style="left:710px;width:77px;top:765px;text-align:center">01.10.2020</div>
<div class="t" style="left:787px;width:76px;top:765px;text-align:center">31.10.2020</div>
<div class="chk" style="left:1137px;top:763px"><svg width="11" height="11" style="position:absolute;left:0;top:0" viewBox="0 0 11 11"><path d="M1 5.2l3.2 3.3L10 1.8" fill="none" stroke="#222" stroke-width="1.4"/></svg></div>
<div class="a" style="left:1194px;top:763px;width:13px;height:13px;border:1px solid #333;background:#fff"></div>
<div class="t" style="left:1235px;width:75px;top:765px;text-align:right">300,00</div>
<!-- h scrollbar -->
<div class="a" style="left:282px;top:972px;width:1048px;height:17px;background:#f0f0f0"></div>
<div class="a" style="left:300px;top:973px;width:262px;height:15px;background:#cdcdcd"></div>
<svg class="a" style="left:288px;top:977px" width="7" height="8"><path d="M5.5 .8L1.8 4 5.5 7.2" fill="none" stroke="#505050" stroke-width="2"/></svg>
<svg class="a" style="left:1318px;top:977px" width="7" height="8"><path d="M1.5 .8L5.2 4 1.5 7.2" fill="none" stroke="#505050" stroke-width="2"/></svg>
<div class="a" style="left:282px;top:989px;width:1052px;height:3px;background:#f0f0f0;border-top:1px solid #fff;border-bottom:1px solid #f0f0f0"></div><div class="a" style="left:281px;top:991px;width:1053px;height:2px;background:#a8a8a8"></div>
<div class="a" style="left:1330px;top:716px;width:1px;height:274px;background:#dcdcdc"></div>
<div class="a" style="left:1333px;top:81px;width:1px;height:912px;background:#a0a0a0"></div><div class="a" style="left:1334px;top:81px;width:1px;height:912px;background:#d4d4d4"></div>
<!-- status bar -->
<div class="a" style="left:1px;top:993px;width:1334px;height:23px;background:#f0f0f0;border-top:1px solid #d7d7d7"></div>
<div class="t" style="left:4px;top:1001px">365 Elemente</div>
<div class="a" style="left:76px;top:996px;width:1px;height:19px;background:#d7d7d7"></div>
<div class="t" style="left:82px;top:1001px">Daten erfolgreich geladen</div>
<div class="a" style="left:863px;top:996px;width:1px;height:19px;background:#d7d7d7"></div>
<div class="a" style="left:871px;top:996px;width:190px;height:18px;background:#e6e6e6;border:1px solid #bcbcbc"></div>
<div class="a" style="left:1066px;top:996px;width:1px;height:19px;background:#d7d7d7"></div>
<div class="a" style="left:1099px;top:996px;width:1px;height:19px;background:#d7d7d7"></div>
<div class="a" style="left:1200px;top:996px;width:1px;height:19px;background:#d7d7d7"></div>
<div class="t" style="left:1205px;top:1001px">local</div>
<div class="a" style="left:1231px;top:996px;width:1px;height:19px;background:#d7d7d7"></div>
<div class="t" style="left:1238px;top:1001px">DE</div>
<div class="a" style="left:1255px;top:996px;width:1px;height:19px;background:#d7d7d7"></div>
<div class="t" style="left:1261px;top:1001px">04.12.2020</div>
<div class="a" style="left:1320px;top:996px;width:1px;height:19px;background:#d7d7d7"></div>
<div class="a" style="left:1px;top:1015px;width:1072px;height:2px;background:#1883d7"></div>
<div class="a" style="left:1073px;top:1015px;width:263px;height:1px;background:#8c8c8c"></div>
<div class="a" style="left:1073px;top:1016px;width:263px;height:1px;background:#fff"></div>
<svg class="a" style="left:1326px;top:1007px" width="9" height="8" shape-rendering="crispEdges" fill="#b4b4b4"><rect x="7" y="0" width="2" height="2"/><rect x="4" y="3" width="2" height="2"/><rect x="7" y="3" width="2" height="2"/><rect x="1" y="6" width="2" height="2"/><rect x="4" y="6" width="2" height="2"/><rect x="7" y="6" width="2" height="2"/></svg>
</body></html>
